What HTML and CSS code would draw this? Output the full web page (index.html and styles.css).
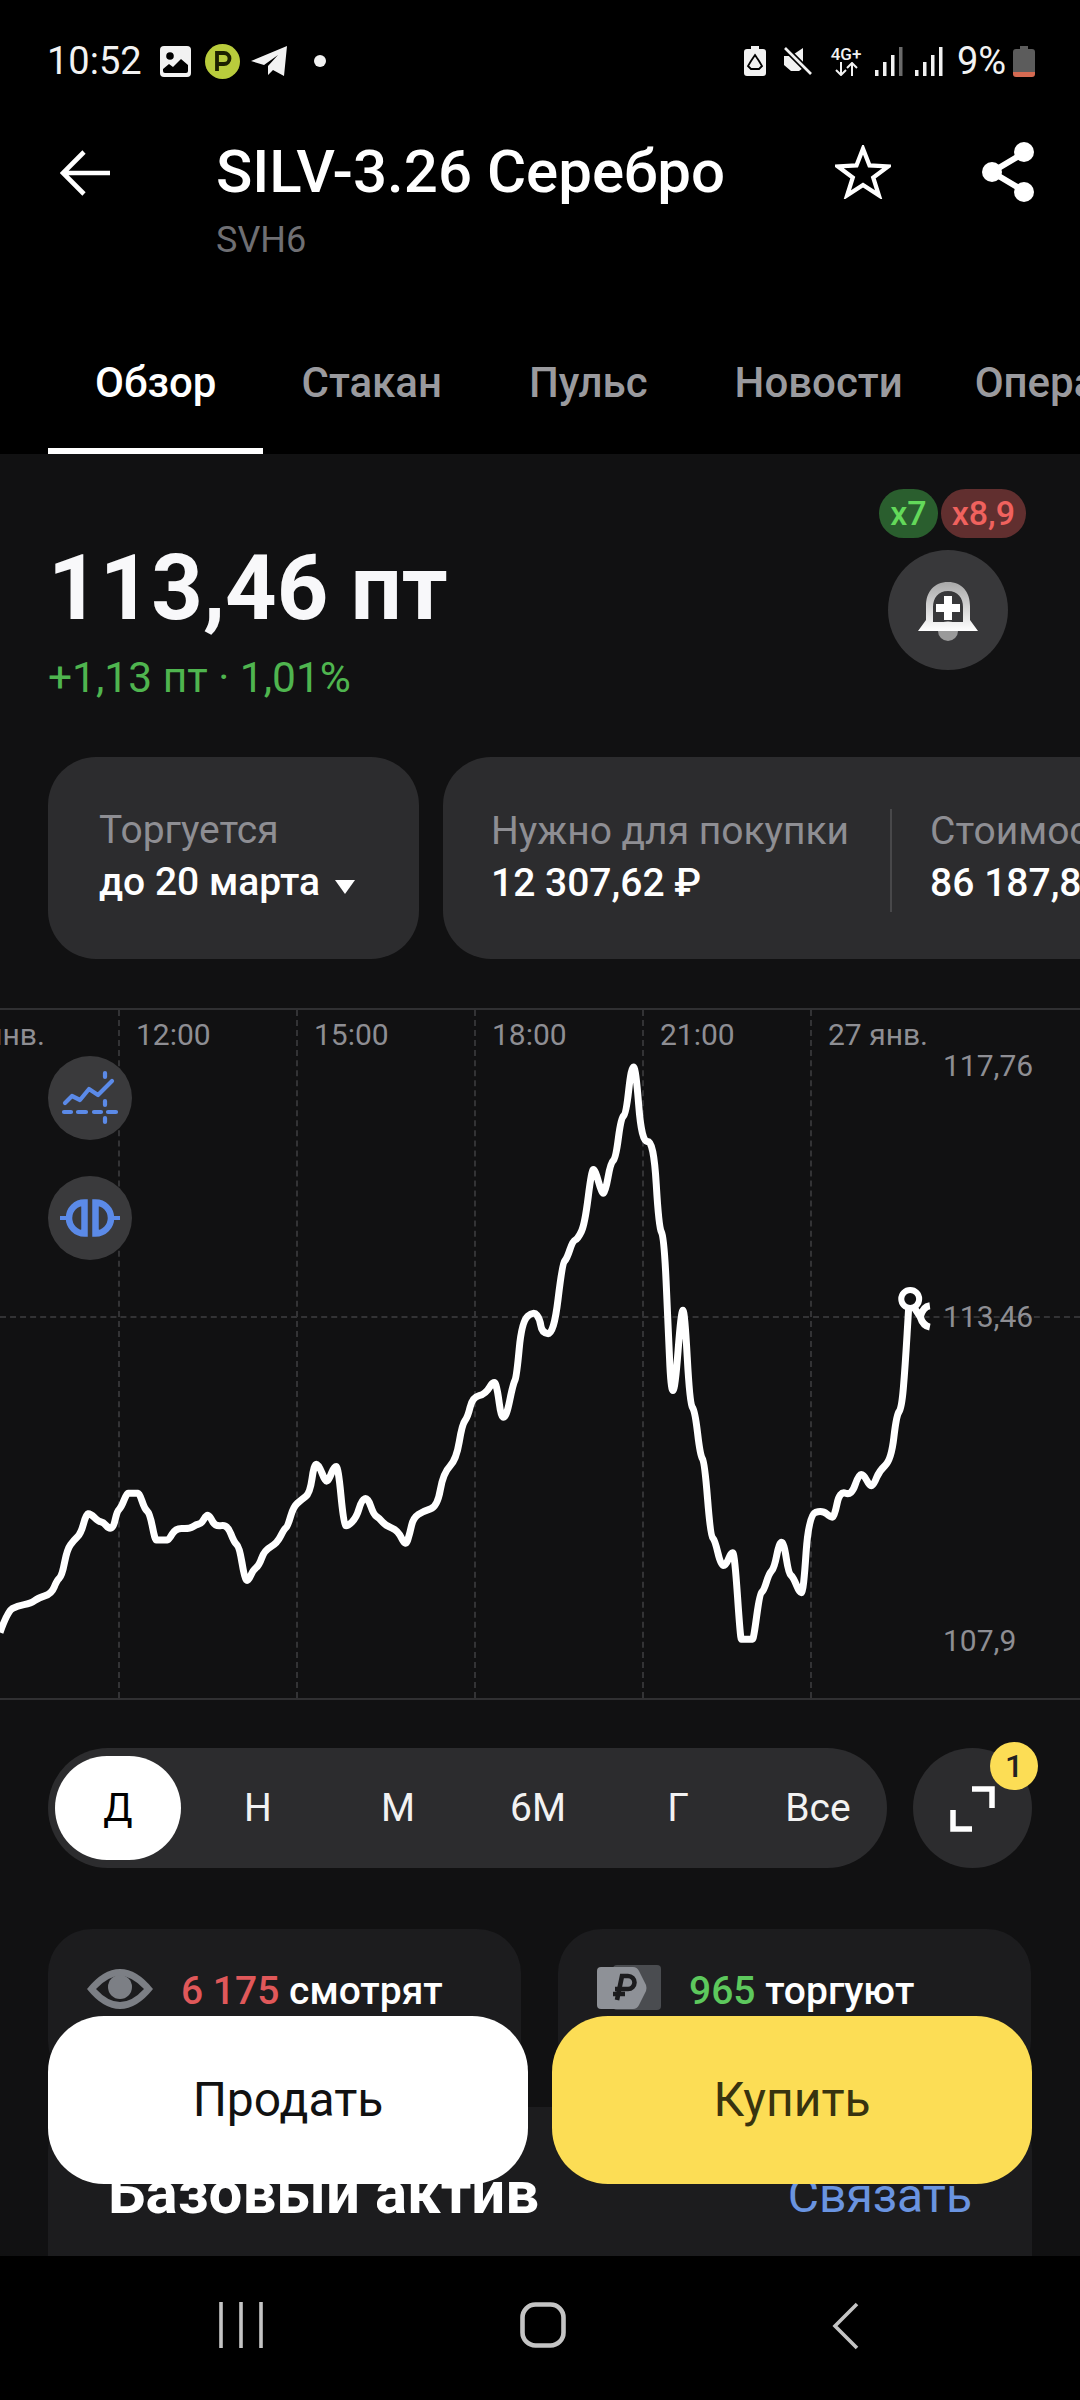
FILE: index.html
```html
<!DOCTYPE html>
<html lang="ru">
<head>
<meta charset="utf-8">
<title>SILV-3.26 Серебро</title>
<link rel="stylesheet" href="styles.css">
</head>
<body>
<div class="page">
  <div class="top">
    <div class="status">
      <div class="status-side">
        <span class="time">10:52</span>
        <svg class="ic-img" viewBox="0 0 31 31"><rect width="31" height="31" rx="4" fill="#f2f2f2"/><circle cx="10" cy="10" r="3.800" fill="#000"/><path d="M3 25 L3 23 L9 18 L13 21 L21 13 L28 19 L28 25 Q28 27 26 27 L5 27 Q3 27 3 25Z" fill="#000"/></svg>
        <svg class="ic-p" viewBox="0 0 35 35"><circle cx="17.500" cy="17.500" r="17.500" fill="#b9cc3c"/><path d="M12 27 V9 H19 A5.500 5.500 0 0 1 19 20 H12" fill="none" stroke="#1c2000" stroke-width="3.800"/></svg>
        <svg class="ic-tg" viewBox="0 0 37 31"><path d="M0 15 L36 0 L33 30 L22 24 L17 29 L17 20 L27 9 L13 19Z" fill="#f2f2f2"/></svg>
        <span class="dot"></span>
      </div>
      <div class="status-side">
        <svg class="ic-rec" viewBox="0 0 22 30"><path d="M7 0 H15 V3 H19 Q22 3 22 6 V27 Q22 30 19 30 H3 Q0 30 0 27 V6 Q0 3 3 3 H7Z" fill="#f2f2f2"/><path d="M9 12 L11 9 L13 12 M15 15 L18 20 L15 23 H13 M9 23 H7 L4 20 L7 15 M11 9 L15 15 M7 15 L9 12 M9 23 H13" fill="none" stroke="#000" stroke-width="1.800"/></svg>
        <svg class="ic-mute" viewBox="0 0 30 28"><path d="M1 9 H8 L20 1 V21 L16 24 H8 L1 18Z" fill="#f2f2f2"/><path d="M2 1 L28 27" stroke="#000" stroke-width="6"/><path d="M2 1 L28 27" stroke="#f2f2f2" stroke-width="2.600"/></svg>
        <div class="net"><span class="net-t">4G+</span><svg class="ic-arrows" viewBox="0 0 28 14"><path d="M9 0 V12 M4 8 L9 13 L14 8 M20 14 V2 M15 6 L20 1 L25 6" fill="none" stroke="#f2f2f2" stroke-width="2"/></svg></div>
        <svg class="ic-sig" viewBox="0 0 28 29"><rect x="0" y="23" width="3.500" height="6" fill="#f2f2f2"/><rect x="8" y="15" width="3.500" height="14" fill="#f2f2f2"/><rect x="16" y="8" width="3.500" height="21" fill="#f2f2f2"/><rect x="24" y="0" width="3.500" height="29" fill="#6a6a6a"/></svg>
        <svg class="ic-sig" viewBox="0 0 28 29"><rect x="0" y="23" width="3.500" height="6" fill="#f2f2f2"/><rect x="8" y="15" width="3.500" height="14" fill="#f2f2f2"/><rect x="16" y="8" width="3.500" height="21" fill="#f2f2f2"/><rect x="24" y="0" width="3.500" height="29" fill="#f2f2f2"/></svg>
        <span class="pct">9%</span>
        <svg class="ic-bat" viewBox="0 0 22 31"><path d="M7 0 H15 V3 H19 Q22 3 22 6 V27 H0 V6 Q0 3 3 3 H7Z" fill="#5c5c5c"/><path d="M0 26 H22 V28 Q22 31 19 31 H3 Q0 31 0 28Z" fill="#d56a52"/></svg>
      </div>
    </div>

    <div class="header">
      <svg class="ic-back" viewBox="0 0 50 46"><path d="M24 2 L3 23 L24 44 M3 23 H50" fill="none" stroke="#fff" stroke-width="4.600"/></svg>
      <div class="title-block">
        <div class="title">SILV-3.26 Серебро</div>
        <div class="ticker">SVH6</div>
      </div>
      <svg class="ic-star" viewBox="0 0 60 58"><path d="M30 4 L37 22 L57 23 L41 35 L47 54 L30 43 L13 54 L19 35 L3 23 L23 22Z" fill="none" stroke="#fff" stroke-width="4.600"/></svg>
      <svg class="ic-share" viewBox="0 0 54 60"><path d="M43 11 L11 30 L43 49" fill="none" stroke="#fff" stroke-width="6"/><circle cx="43" cy="10" r="10" fill="#fff"/><circle cx="11" cy="30" r="10" fill="#fff"/><circle cx="43" cy="50" r="10" fill="#fff"/></svg>
    </div>

    <div class="tabs">
      <div class="tab tab-active">Обзор</div>
      <div class="tab">Стакан</div>
      <div class="tab">Пульс</div>
      <div class="tab tab-news">Новости</div>
      <div class="tab">Операции</div>
    </div>
  </div>

  <div class="main">
    <div class="price-row">
      <div class="price-block">
        <div class="price">113,46 пт</div>
        <div class="change">+1,13 пт · 1,01%</div>
      </div>
      <div class="alert-block">
        <div class="badges">
          <span class="badge badge-green">x7</span>
          <span class="badge badge-red">x8,9</span>
        </div>
        <div class="bell">
          <svg class="ic-bell" viewBox="0 0 120 120">
            <defs><linearGradient id="bellg" x1="0" y1="0" x2="0" y2="1"><stop offset="0" stop-color="#a8a8a8"/><stop offset="1" stop-color="#ffffff"/></linearGradient></defs>
            <circle cx="60" cy="81" r="10" fill="#9a9a9a"/>
            <path fill-rule="evenodd" fill="url(#bellg)" d="M60 32 C46 32 38 42 38 56 V70 L30 81 H90 L82 70 V56 C82 42 74 32 60 32Z M60 41 C50 41 45 48 45 57 V72 H75 V57 C75 48 70 41 60 41Z"/>
            <path d="M56 46 H64 V54 H72 V62 H64 V70 H56 V62 H48 V54 H56Z" fill="#fff"/>
          </svg>
        </div>
      </div>
    </div>

    <div class="cards">
      <div class="card card-trade">
        <div class="card-label">Торгуется</div>
        <div class="card-value">до 20 марта <svg class="ic-tri" viewBox="0 0 22 16"><path d="M1 1 H21 L11 15Z" fill="#fff"/></svg></div>
      </div>
      <div class="card card-wide">
        <div class="cell">
          <div class="card-label">Нужно для покупки</div>
          <div class="card-value">12 307,62 ₽</div>
        </div>
        <div class="cell cell-second">
          <div class="card-label">Стоимость</div>
          <div class="card-value">86 187,80 ₽</div>
        </div>
      </div>
    </div>

    <div class="chart">
      <i class="gv gv1"></i><i class="gv gv2"></i><i class="gv gv3"></i><i class="gv gv4"></i><i class="gv gv5"></i>
      <i class="gh"></i>
      <span class="tl tl0">янв.</span>
      <span class="tl tl1">12:00</span>
      <span class="tl tl2">15:00</span>
      <span class="tl tl3">18:00</span>
      <span class="tl tl4">21:00</span>
      <span class="tl tl5">27 янв.</span>
      <span class="pl pl1">117,76</span>
      <span class="pl pl2">113,46</span>
      <span class="pl pl3">107,9</span>
      <svg class="line" viewBox="0 0 3136 1568" preserveAspectRatio="none">
        <polyline id="price-line" class="stroke" points="0,1372 22,1325 50,1312 90,1307 110,1295 150,1285 165,1255 180,1245 195,1185 215,1165 235,1150 250,1107 262,1105 285,1123 300,1125 317,1140 330,1135 340,1100 352,1092 368,1060 375,1060 398,1060 405,1060 420,1095 435,1105 450,1165 458,1165 482,1165 490,1165 510,1138 550,1140 570,1130 585,1128 600,1108 610,1112 625,1135 660,1130 680,1170 695,1180 710,1250 720,1258 735,1232 752,1222 768,1188 805,1172 825,1140 835,1135 852,1090 875,1075 900,1060 912,995 925,995 945,1035 955,1030 970,1000 982,1000 998,1130 1008,1135 1035,1115 1050,1075 1068,1070 1085,1108 1100,1115 1120,1133 1155,1143 1178,1180 1190,1150 1200,1115 1230,1100 1270,1090 1287,1015 1325,985 1342,905 1358,890 1372,845 1410,838 1435,805 1445,830 1455,890 1470,890 1490,815 1500,800 1515,675 1550,652 1568,670 1573,700 1608,705 1633,545 1646,535 1663,495 1678,490 1698,458 1718,335 1728,335 1748,390 1758,385 1773,320 1788,310 1803,220 1818,210 1833,105 1846,105 1863,275 1898,270 1913,465 1928,485 1940,680 1948,830 1960,830 1978,650 1988,650 2003,860 2018,875 2033,975 2046,990 2063,1155 2076,1165 2093,1222 2108,1222 2123,1192 2133,1195 2150,1387 2155,1387 2183,1387 2188,1387 2206,1285 2218,1278 2233,1240 2248,1228 2263,1170 2276,1170 2290,1240 2303,1248 2323,1285 2333,1280 2348,1108 2388,1098 2413,1115 2423,1112 2438,1055 2473,1065 2493,1018 2508,1018 2526,1045 2538,1040 2553,1010 2588,985 2603,885 2618,870 2628,780 2640,625"/>
        <path class="stroke" d="M2655 645 L2672 665 Q2680 685 2700 688 M2700 640 Q2680 642 2672 665"/>
        <ellipse class="stroke marker" cx="2643" cy="625" rx="26" ry="20"/>
      </svg>
      <div class="tool tool1">
        <svg class="ic-tool" viewBox="0 0 84 84"><path d="M17 47 L24 40 L32 44 L41 33 L50 39 L64 25" fill="none" stroke="#5b8ae8" stroke-width="4.200" stroke-linecap="round" stroke-linejoin="round"/><path d="M16 56 H23 M30 56 H38 M46 56 H53 M60 56 H68 M57 17 V21 M57 45 V49 M57 62 V66" fill="none" stroke="#5b8ae8" stroke-width="4.200" stroke-linecap="round"/></svg>
      </div>
      <div class="tool tool2">
        <svg class="ic-tool" viewBox="0 0 84 84"><path d="M36.500 26.500 V57.500 A15.500 15.500 0 0 1 36.500 26.500Z M47.500 26.500 V57.500 A15.500 15.500 0 0 0 47.500 26.500Z" fill="none" stroke="#5b8ae8" stroke-width="6.500"/><path d="M12 42 H23 M61 42 H72" stroke="#5b8ae8" stroke-width="4.200"/></svg>
      </div>
    </div>

    <div class="period-row">
      <div class="periods">
        <span class="period period-active">Д</span>
        <span class="period">Н</span>
        <span class="period">М</span>
        <span class="period">6М</span>
        <span class="period">Г</span>
        <span class="period">Все</span>
      </div>
      <div class="expand">
        <svg class="ic-expand" viewBox="0 0 120 120"><path d="M59 41 H79 V60 M40 62 V81 H59" fill="none" stroke="#fff" stroke-width="5.500"/></svg>
        <span class="count">1</span>
      </div>
    </div>

    <div class="stats">
      <div class="stat">
        <svg class="ic-eye" viewBox="0 0 66 40"><path d="M0 20 Q16 0 33 0 Q50 0 66 20 Q50 40 33 40 Q16 40 0 20Z" fill="#7c7f85"/><path d="M9 20 Q21 7 33 7 Q45 7 57 20 Q45 33 33 33 Q21 33 9 20Z" fill="#1c1c1e"/><circle cx="33" cy="18" r="12" fill="#7c7f85"/></svg>
        <span class="stat-text"><b class="num-red">6 175</b> смотрят</span>
      </div>
      <div class="stat">
        <svg class="ic-rub" viewBox="0 0 64 46"><rect x="16" y="0" width="48" height="45" rx="4" fill="#4a4c50"/><path d="M4 2 H36 Q40 2 42 6 L49 20 Q50 23 49 26 L42 40 Q40 44 36 44 H4 Q0 44 0 40 V6 Q0 2 4 2Z" fill="#8e9197"/><path d="M20 35 L25 11 H31 A6 6 0 0 1 31 24 H18 M16 29 H28" fill="none" stroke="#1c1c1e" stroke-width="4.600"/></svg>
        <span class="stat-text"><b class="num-green">965</b> торгуют</span>
      </div>
    </div>

    <div class="asset">
      <span class="asset-title">Базовый актив</span>
      <span class="asset-link">Связать</span>
    </div>
  </div>

  <div class="actions">
    <div class="action action-sell">Продать</div>
    <div class="action action-buy">Купить</div>
  </div>

  <div class="nav">
    <svg class="ic-nav1" viewBox="0 0 44 46"><path d="M2 0 V46 M22 0 V46 M42 0 V46" stroke="#c4c4c4" stroke-width="3.600"/></svg>
    <svg class="ic-nav2" viewBox="0 0 46 46"><rect x="2.500" y="2.500" width="41" height="41" rx="13" fill="none" stroke="#c4c4c4" stroke-width="4.600"/></svg>
    <svg class="ic-nav3" viewBox="0 0 27 48"><path d="M25 2 L3 24 L25 46" fill="none" stroke="#c4c4c4" stroke-width="3.600"/></svg>
  </div>
</div>
<script src="chart.js"></script>
</body>
</html>
```
FILE: styles.css
```css
* { box-sizing: border-box; }
html, body { margin: 0; padding: 0; background: #000; }
body { font-family: Roboto, "Noto Sans", sans-serif; color: #fff; }
.page { position: relative; width: 1080px; height: 2400px; overflow: hidden; background: #000; }

.top { height: 454px; background: #000; }
.status { height: 122px; padding: 0 45px 0 47px; display: flex; justify-content: space-between; align-items: center; }
.status-side { display: flex; align-items: center; }
.time { font-size: 38px; width: 113px; color: #f2f2f2; }
.pct { font-size: 38px; color: #f2f2f2; margin-left: 14px; width: 56px; }
.ic-img { width: 31px; height: 31px; }
.ic-p { width: 35px; height: 35px; margin-left: 14px; }
.ic-tg { width: 37px; height: 31px; margin-left: 11px; }
.dot { width: 12px; height: 12px; border-radius: 50%; background: #f2f2f2; margin-left: 26px; }
.ic-rec { width: 22px; height: 30px; }
.ic-mute { width: 30px; height: 28px; margin-left: 17px; }
.net { width: 34px; margin-left: 16px; display: flex; flex-direction: column; align-items: center; }
.net-t { font-size: 17px; font-weight: 500; line-height: 16px; color: #f2f2f2; }
.ic-arrows { width: 28px; height: 14px; }
.ic-sig { width: 28px; height: 29px; margin-left: 12px; }
.ic-bat { width: 22px; height: 31px; }

.header { position: relative; height: 164px; display: flex; align-items: flex-start; padding: 0 45px 0 60px; }
.ic-back { width: 50px; height: 46px; margin-top: 28px; flex: none; }
.title-block { margin-left: 106px; flex: 1; }
.title { font-size: 60px; font-weight: 500; line-height: 66px; margin-top: 17px; }
.ticker { font-size: 36px; line-height: 40px; color: #6f6f73; margin-top: 15px; }
.ic-star { width: 56px; height: 54px; margin-top: 23px; flex: none; }
.ic-share { width: 54px; height: 60px; margin-left: 90px; margin-top: 20px; flex: none; }

.tabs { display: flex; height: 168px; padding-left: 48px; white-space: nowrap; overflow: hidden; }
.tab { height: 168px; font-size: 42px; font-weight: 500; color: #9a9a9e; line-height: 194px; margin-right: 87px; }
.tab-active { color: #fff; padding: 0 47px; margin-right: 38px; border-bottom: 6px solid #fff; }
.tab-news { margin-right: 72px; }

.main { height: 1802px; background: #111112; padding-top: 35px; }
.price-row { display: flex; justify-content: space-between; padding: 0 54px 0 48px; height: 181px; }
.price { font-size: 90px; font-weight: 700; line-height: 104px; margin-top: 48px; color: #f8f8fa; }
.change { font-size: 42.500px; line-height: 46px; color: #4fb54f; margin-top: 14px; }
.alert-block { display: flex; flex-direction: column; align-items: flex-end; }
.badges { display: flex; gap: 3px; height: 49px; }
.badge { height: 49px; font-size: 34px; font-weight: 500; line-height: 49px; padding: 0 11px; border-radius: 25px; }
.badge-green { background: #2a5e2e; color: #63d95a; }
.badge-red { background: #612f2f; color: #f0625e; }
.bell { width: 120px; height: 120px; border-radius: 50%; background: #38383a; margin-top: 12px; margin-right: 18px; }
.ic-bell { width: 120px; height: 120px; display: block; }

.cards { display: flex; gap: 24px; padding-left: 48px; margin-top: 87px; width: 1080px; overflow: hidden; }
.card { height: 202px; background: #2c2c2e; border-radius: 48px; flex: none; display: flex; }
.card-trade { width: 371px; padding: 51px 0 0 51px; display: block; }
.card-wide { width: 840px; padding-left: 48px; padding-top: 52px; }
.card-label { font-size: 39px; line-height: 44px; color: #8e8e93; white-space: nowrap; }
.card-value { font-size: 39px; font-weight: 500; line-height: 44px; margin-top: 8px; white-space: nowrap; }
.ic-tri { width: 22px; height: 16px; margin-left: 4px; }
.cell { height: 103px; }
.cell-second { border-left: 2px solid #48484a; margin-left: 41px; padding-left: 38px; }

.chart { position: relative; height: 692px; margin-top: 49px; border-top: 2px solid #303032; border-bottom: 2px solid #303032; overflow: hidden; }
.gv { position: absolute; top: 0; bottom: 0; width: 0; border-left: 2px dashed #333335; }
.gv1 { left: 118px; } .gv2 { left: 296px; } .gv3 { left: 474px; } .gv4 { left: 642px; } .gv5 { left: 810px; }
.gh { position: absolute; left: 0; right: 0; top: 306px; border-top: 2px dashed #333335; }
.tl, .pl { position: absolute; font-size: 30px; line-height: 34px; color: #8e8e93; white-space: nowrap; }
.tl { top: 8px; }
.tl0 { left: -14px; } .tl1 { left: 136px; } .tl2 { left: 314px; } .tl3 { left: 492px; } .tl4 { left: 660px; } .tl5 { left: 828px; }
.pl { left: 943px; }
.pl1 { top: 39px; } .pl2 { top: 290px; } .pl3 { top: 614px; }
.line { position: absolute; left: 0; top: 10px; width: 1080px; height: 700px; }
.stroke { fill: none; stroke: #fff; stroke-width: 7px; stroke-linejoin: round; stroke-linecap: butt; vector-effect: non-scaling-stroke; }
.marker { fill: #111112; stroke-width: 6px; }
.tool { position: absolute; left: 48px; width: 84px; height: 84px; border-radius: 50%; background: #3a3a3c; }
.tool1 { top: 46px; } .tool2 { top: 166px; }
.ic-tool { width: 84px; height: 84px; display: block; }

.period-row { display: flex; padding: 0 48px; gap: 26px; margin-top: 48px; }
.periods { width: 839px; height: 120px; background: #2c2c2e; border-radius: 60px; display: grid; grid-template-columns: repeat(6, 140px); align-items: center; justify-items: center; }
.period { font-size: 39px; color: #f2f2f2; line-height: 104px; }
.period-active { width: 126px; height: 104px; border-radius: 52px; background: #fff; color: #000; text-align: center; }
.expand { position: relative; width: 119px; height: 120px; border-radius: 50%; background: #2c2c2e; }
.ic-expand { width: 120px; height: 120px; display: block; }
.count { position: absolute; left: 77px; top: -6px; width: 48px; height: 48px; border-radius: 50%; background: #fcdd55; color: #222; font-size: 32px; font-weight: 500; line-height: 48px; text-align: center; }

.stats { display: flex; gap: 37px; padding: 0 48px; margin-top: 61px; }
.stat { width: 473px; height: 156px; background: #1c1c1e; border-radius: 44px; display: flex; align-items: flex-start; padding: 40px 0 0 39px; }
.ic-eye { width: 66px; height: 40px; flex: none; }
.ic-rub { width: 64px; height: 46px; flex: none; margin-top: -4px; }
.stat-text { font-size: 39px; font-weight: 500; line-height: 44px; margin-left: 28px; white-space: nowrap; }
.stat-text b { font-weight: 500; }
.num-red { color: #e0585a; }
.num-green { color: #5dc85d; }

.asset { margin: 22px 48px 0; height: 300px; background: #1c1c1e; border-radius: 44px 44px 0 0; display: flex; justify-content: space-between; padding: 54px 60px 0; align-items: flex-start; }
.asset-title { font-size: 60px; font-weight: 700; line-height: 64px; }
.asset-link { font-size: 48px; line-height: 64px; color: #6a94e0; margin-top: 3px; }

.actions { position: absolute; left: 48px; right: 48px; top: 2016px; display: flex; gap: 24px; }
.action { flex: 1; height: 168px; border-radius: 56px; font-size: 48px; text-align: center; line-height: 168px; }
.action-sell { background: #fff; color: #111; }
.action-buy { background: #fcdd55; color: #38330f; }

.nav { position: absolute; left: 0; right: 0; bottom: 0; height: 144px; background: #000; }
.nav svg { position: absolute; top: 46px; }
.ic-nav1 { left: 219px; width: 44px; height: 46px; }
.ic-nav2 { left: 520px; width: 46px; height: 46px; }
.ic-nav3 { left: 832px; width: 27px; height: 48px; }
```
FILE: chart.js
```js
// Rounds the corners of the price line: each sampled point becomes the control
// point of a curve running between the midpoints of its two neighbouring segments.
var line = document.getElementById('price-line');
var pts = line.getAttribute('points').trim().split(/\s+/).map(function (p) {
  return p.split(',').map(Number);
});
var d = 'M' + pts[0].join(' ');
for (var i = 1; i < pts.length - 1; i++) {
  var mx = (pts[i][0] + pts[i + 1][0]) / 2;
  var my = (pts[i][1] + pts[i + 1][1]) / 2;
  d += ' Q' + pts[i].join(' ') + ' ' + mx + ' ' + my;
}
d += ' L' + pts[pts.length - 1].join(' ');
var path = document.createElementNS('http://www.w3.org/2000/svg', 'path');
path.setAttribute('class', 'stroke');
path.setAttribute('d', d);
line.parentNode.replaceChild(path, line);
```
